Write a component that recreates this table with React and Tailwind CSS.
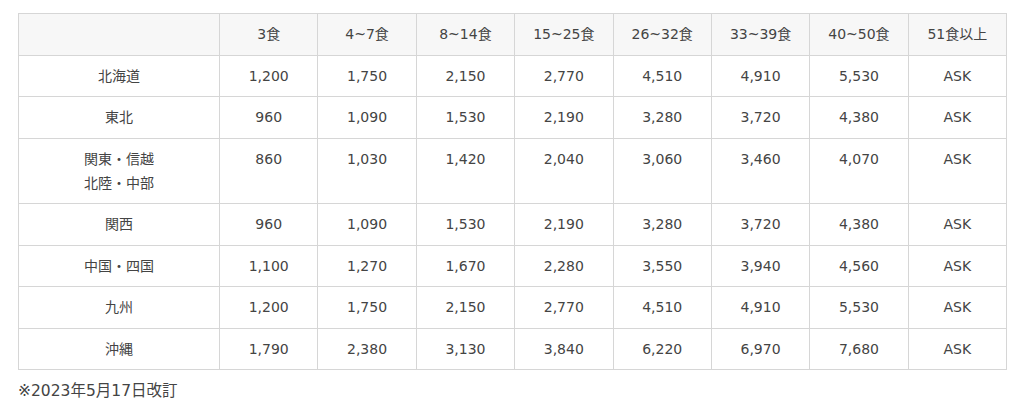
import React from "react";

const heads = ["3食", "4~7食", "8~14食", "15~25食", "26~32食", "33~39食", "40~50食", "51食以上"];

const rows = [
  [["北海道"], "1,200", "1,750", "2,150", "2,770", "4,510", "4,910", "5,530"],
  [["東北"], "960", "1,090", "1,530", "2,190", "3,280", "3,720", "4,380"],
  [["関東・信越", "北陸・中部"], "860", "1,030", "1,420", "2,040", "3,060", "3,460", "4,070"],
  [["関西"], "960", "1,090", "1,530", "2,190", "3,280", "3,720", "4,380"],
  [["中国・四国"], "1,100", "1,270", "1,670", "2,280", "3,550", "3,940", "4,560"],
  [["九州"], "1,200", "1,750", "2,150", "2,770", "4,510", "4,910", "5,530"],
  [["沖縄"], "1,790", "2,380", "3,130", "3,840", "6,220", "6,970", "7,680"],
];

const cell = "border border-[#d6d6d6] px-2 py-[8.25px] text-center align-top leading-[24px]";

export default function App() {
  return (
    <div
      className="bg-white min-h-[411px] pt-[13px] pl-[18px] text-[14px] text-[#444]"
      style={{ fontFamily: '"DejaVu Sans", "Noto Sans CJK JP", sans-serif' }}
    >
      <table className="table-fixed border-collapse w-[989px]">
        <colgroup>
          <col className="w-[201px]" />
          {heads.map((h) => (
            <col key={h} />
          ))}
        </colgroup>
        <thead>
          <tr className="bg-[#f7f7f7]">
            <th className={cell + " font-normal"}></th>
            {heads.map((h) => (
              <th key={h} className={cell + " font-normal"}>
                {h}
              </th>
            ))}
          </tr>
        </thead>
        <tbody>
          {rows.map((r, i) => (
            <tr key={i}>
              <td className={cell}>
                {r[0].map((l) => (
                  <div key={l}>{l}</div>
                ))}
              </td>
              {r.slice(1).map((v, j) => (
                <td key={j} className={cell}>
                  {v}
                </td>
              ))}
              <td className={cell}>ASK</td>
            </tr>
          ))}
        </tbody>
      </table>
      <p className="mt-[9px] leading-[24px] text-[15.5px]">※2023年5月17日改訂</p>
    </div>
  );
}
